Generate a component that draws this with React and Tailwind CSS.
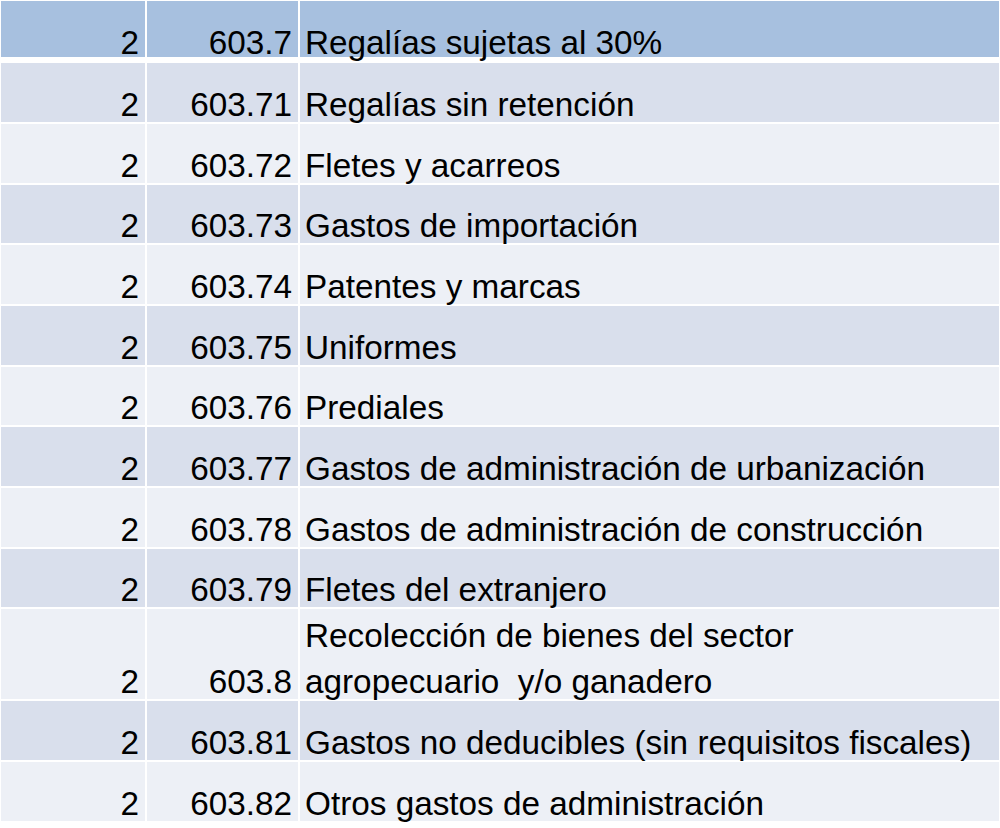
import React from "react";

const rows = [
  ["603.71", "Regalías sin retención"],
  ["603.72", "Fletes y acarreos"],
  ["603.73", "Gastos de importación"],
  ["603.74", "Patentes y marcas"],
  ["603.75", "Uniformes"],
  ["603.76", "Prediales"],
  ["603.77", "Gastos de administración de urbanización"],
  ["603.78", "Gastos de administración de construcción"],
  ["603.79", "Fletes del extranjero"],
];

function Row({ code, label, dark, tall }) {
  const bg = dark ? "bg-[#D9DFEC]" : "bg-[#EDF0F6]";
  const h = tall ? "h-[90px]" : "h-[58.67px]";
  return (
    <div className={`grid grid-cols-[144px_151px_699px] gap-x-[2px] ${h}`}>
      <div className={`${bg} flex items-end justify-end pr-[6px]`}>
        <div className="leading-[46px] mb-[-6px]">2</div>
      </div>
      <div className={`${bg} flex items-end justify-end pr-[6px]`}>
        <div className="leading-[46px] mb-[-6px]">{code}</div>
      </div>
      <div className={`${bg} flex items-end pl-[5px]`}>
        <div className="leading-[46px] mb-[-6px] whitespace-pre">{label}</div>
      </div>
    </div>
  );
}

export default function App() {
  return (
    <div className="w-[1000px] h-[828px] bg-white pt-px pl-px flex flex-col font-['Liberation_Sans',Arial,sans-serif] text-[33.3px] text-black overflow-hidden">
      <div className="grid grid-cols-[144px_151px_699px] gap-x-[2px] h-[56.3px] shrink-0">
        <div className="bg-[#A7C0DF] flex items-end justify-end pr-[6px]">
          <div className="leading-[46px] mb-[-8.5px]">2</div>
        </div>
        <div className="bg-[#A7C0DF] flex items-end justify-end pr-[6px]">
          <div className="leading-[46px] mb-[-8.5px]">603.7</div>
        </div>
        <div className="bg-[#A7C0DF] flex items-end pl-[5px]">
          <div className="leading-[46px] mb-[-8.5px]">Regalías sujetas al 30%</div>
        </div>
      </div>
      <div className="mt-[6px] flex flex-col gap-[2px] shrink-0">
        {rows.map(([c, l], i) => (
          <Row key={c} code={c} label={l} dark={i % 2 === 0} />
        ))}
        <Row
          code="603.8"
          label={"Recolección de bienes del sector\nagropecuario  y/o ganadero"}
          dark={false}
          tall
        />
        <Row code="603.81" label="Gastos no deducibles (sin requisitos fiscales)" dark />
        <Row code="603.82" label="Otros gastos de administración" dark={false} />
      </div>
    </div>
  );
}
